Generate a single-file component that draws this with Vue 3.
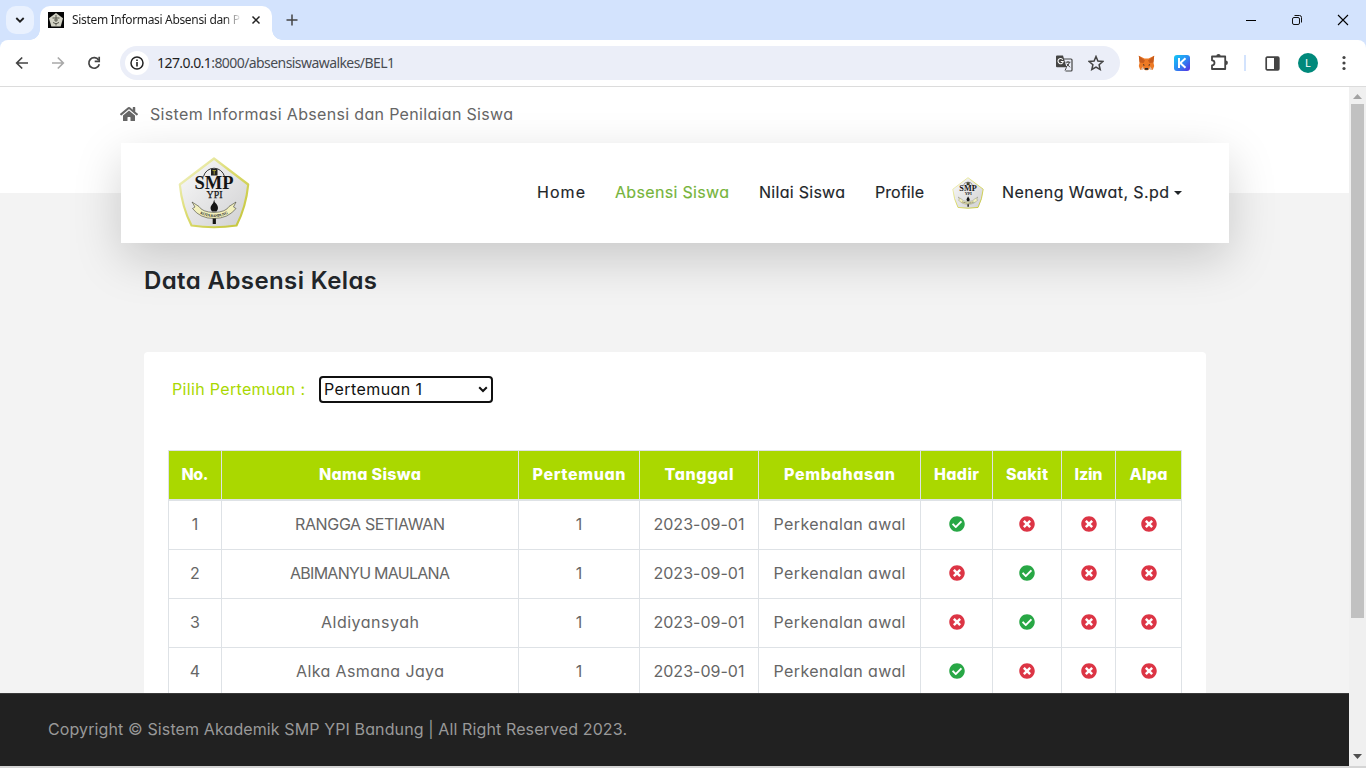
<script setup>
const headers = [
  ['No.', 27], ['Nama Siswa', 102], ['Pertemuan', 93], ['Tanggal', 69], ['Pembahasan', 111],
  ['Hadir', 45], ['Sakit', 42], ['Izin', 28], ['Alpa', 38],
]
const rows = [
  { name: 'RANGGA SETIAWAN', w: 150, marks: [1, 0, 0, 0] },
  { name: 'ABIMANYU MAULANA', w: 160, marks: [0, 1, 0, 0] },
  { name: 'Aldiyansyah', w: 98, marks: [0, 1, 0, 0] },
  { name: 'Alka Asmana Jaya', w: 148, marks: [1, 0, 0, 0] },
]

// Tracks a label out or in so that it fills a given width in pixels.
const vFit = {
  mounted(el, { value }) {
    const n = el.textContent.length
    const natural = el.getBoundingClientRect().width
    const gap = (value - natural) / Math.max(1, n - 1)
    el.style.letterSpacing = gap + 'px'
    el.style.marginRight = -gap + 'px'
  },
}
</script>

<template>
  <div class="window">
    <svg class="defs" width="0" height="0" aria-hidden="true">
      <defs>
        <linearGradient id="face" x1="0" y1="0" x2="1" y2="1">
          <stop offset="0" stop-color="#fafafa" /><stop offset="1" stop-color="#d0d0d2" />
        </linearGradient>
        <linearGradient id="rim" x1="0" y1="0" x2="1" y2="1">
          <stop offset="0" stop-color="#f6f6d8" /><stop offset=".45" stop-color="#dcdc70" /><stop offset="1" stop-color="#c3c437" />
        </linearGradient>
        <linearGradient id="kblue" x1="0" y1="0" x2="1" y2="1">
          <stop offset="0" stop-color="#12c8f5" /><stop offset=".5" stop-color="#2b8cf3" /><stop offset="1" stop-color="#5a2be0" />
        </linearGradient>
        <symbol id="crest" viewBox="0 0 72 72">
          <path d="M36 1.500 70.200 27.500Q68 50 58.500 68.500 36 72 13.500 68.500 4 50 1.800 27.500Z" fill="url(#face)" stroke="url(#rim)" stroke-width="2.200" stroke-linejoin="round" />
          <path d="M25.500 19.500a10.800 10.800 0 0 1 21 0" fill="none" stroke="#222" stroke-width=".9" />
          <path d="M33 12h6.500v6.500h-6.500z" fill="#222" /><path d="M34.500 13.500h3.500M36.200 13.500v4" stroke="#a49c35" stroke-width="1" />
          <text x="36" y="32" text-anchor="middle" textLength="39" lengthAdjust="spacingAndGlyphs" font-family="Liberation Serif, serif" font-weight="700" font-size="19" fill="#151515">SMP</text>
          <text x="36.500" y="41" text-anchor="middle" textLength="16" lengthAdjust="spacingAndGlyphs" font-family="Liberation Serif, serif" font-size="10" fill="#151515" stroke="#151515" stroke-width=".25">YPI</text>
          <path d="M36.200 42.500Q36 45 38.500 47 41.500 51 38.500 54.500H34Q31 51 34 47.500 35.500 46 36.200 42.500Z" fill="#151515" />
          <path d="M34.700 60h3.200v7h-3.200z" fill="#151515" />
          <path d="M14 45 21 49.500Q24 55 36 55.500 48 55 51 49.500L58 45 55.500 50 58 51.500Q50 61.500 36 61.500 22 61.500 14.500 51.500L17 50Z" fill="#f3f1bd" stroke="#33332a" stroke-width=".55" />
          <path id="ribbon" d="M22 56.600Q36 63.500 50 56.600" fill="none" />
          <text font-family="Liberation Serif, serif" font-weight="700" font-size="3.800" fill="#222"><textPath href="#ribbon" textLength="29">KOTA BANDUNG</textPath></text>
        </symbol>
        <symbol id="yes" viewBox="0 0 512 512">
          <path fill="#28a745" d="M504 256c0 136.967-111.033 248-248 248S8 392.967 8 256 119.033 8 256 8s248 111.033 248 248zM227.314 387.314l184-184c6.248-6.248 6.248-16.379 0-22.627l-22.627-22.627c-6.248-6.249-16.379-6.249-22.628 0L216 308.118l-70.059-70.059c-6.248-6.248-16.379-6.248-22.628 0l-22.627 22.627c-6.248 6.248-6.248 16.379 0 22.627l104 104c6.249 6.249 16.379 6.249 22.628.001z" />
        </symbol>
        <symbol id="no" viewBox="0 0 512 512">
          <path fill="#dc3545" d="M256 8C119 8 8 119 8 256s111 248 248 248 248-111 248-248S393 8 256 8zm121.600 313.100c4.700 4.700 4.700 12.300 0 17L338 377.600c-4.700 4.700-12.300 4.700-17 0L256 312l-65.100 65.600c-4.700 4.700-12.300 4.700-17 0L134.400 338c-4.700-4.700-4.700-12.300 0-17l65.600-65-65.600-65.100c-4.700-4.700-4.700-12.300 0-17l39.600-39.600c4.700-4.700 12.300-4.700 17 0l65 65.700 65.100-65.600c4.700-4.700 12.300-4.700 17 0l39.600 39.600c4.700 4.700 4.700 12.300 0 17L312 256l65.600 65.100z" />
        </symbol>
      </defs>
    </svg>

    <header class="tabstrip">
      <button class="tab-menu"><svg width="10" height="8" viewBox="0 0 10 8"><path d="M1.300 2 5 5.700 8.700 2" fill="none" stroke="#1f1f1f" stroke-width="1.800" /></svg></button>
      <div class="tab">
        <svg class="favicon" width="16" height="16"><rect width="16" height="16" fill="#050505" /><path d="M8 1 15 6.300 12.700 14.500H3.300L1 6.300Z" fill="#d2d2c4" /><path d="M4.500 6h7M8 3v7M6 8h4M5 10.500q3 2.500 6 0M8 11v2.500" stroke="#55554a" fill="none" /></svg>
        <div class="tab-title"><span v-fit="168">Sistem Informasi Absensi dan P</span></div>
        <svg class="tab-close" width="10" height="10"><path d="m1.500 1.500 7 7m0-7-7 7" stroke="#222" stroke-width="1.500" /></svg>
      </div>
      <svg class="plus" width="12" height="12"><path d="M6 .5v11M.5 6h11" stroke="#444" stroke-width="1.500" /></svg>
      <div class="controls">
        <svg width="12" height="12"><path d="M1 6.500h10" stroke="#000" /></svg>
        <svg width="12" height="12" fill="none" stroke="#111"><rect x="1.500" y="3.500" width="7" height="7" rx="1.500" /><path d="M3.500 1.500h5a2 2 0 0 1 2 2v5" /></svg>
        <svg width="12" height="12"><path d="m1 1 10 10m0-10L1 11" stroke="#000" stroke-width="1.100" /></svg>
      </div>
    </header>

    <div class="toolbar">
      <svg class="arrow" width="14" height="14" fill="none" stroke="#444" stroke-width="1.700"><path d="M13 7H2M7.200 1.500 1.700 7l5.500 5.500" /></svg>
      <svg class="arrow" width="14" height="14" fill="none" stroke="#a9a9a9" stroke-width="1.700"><path d="M1 7h11M6.800 1.500 12.300 7l-5.500 5.500" /></svg>
      <svg class="reload" width="14" height="14" fill="none" stroke="#444" stroke-width="1.700"><path d="M11.600 4A5.300 5.300 0 1 0 12.300 8.300" /><path d="M12.200.8v4.500H7.700" /></svg>
      <div class="address">
        <div class="site-info"><svg width="14" height="14"><circle cx="7" cy="7" r="6" fill="none" stroke="#222" stroke-width="1.500" /><path d="M7 6v4.500M7 3.500v1.600" stroke="#222" stroke-width="1.600" /></svg></div>
        <span class="url" v-fit="238">127.0.0.1<b>:8000/absensiswawalkes/BEL1</b></span>
        <svg class="translate" width="17" height="17" viewBox="0 0 17 17"><path d="M7 4h8a1 1 0 0 1 1 1v10a1 1 0 0 1-1 1H9.500" fill="none" stroke="#444" stroke-width="1.200" /><path d="M1 .5h6l3.500 11.800H1a1 1 0 0 1-1-1V1.500a1 1 0 0 1 1-1z" fill="#444" /><path d="M6.800 4.700A2.600 2.600 0 1 0 7.200 6.500H4.800" fill="none" stroke="#fff" stroke-width="1.100" /><path d="M9.500 7.200h5M12 6v1.200M13.500 7.200Q12.700 10.300 10 12M10.800 8.800 14 12.300M10.500 12.300 9 15.500" fill="none" stroke="#444" /></svg>
        <svg class="star" width="16" height="16" viewBox="0 0 16 16"><path d="m8 1.500 1.900 4.600 4.900.4-3.700 3.200 1.100 4.800L8 12l-4.200 2.500 1.100-4.800L1.200 6.500l4.900-.4z" fill="none" stroke="#444" stroke-width="1.500" /></svg>
      </div>
      <div class="extensions">
        <svg class="fox" width="17" height="16" viewBox="0 0 17 16"><path d="M.8.8 6.500 3.500h4L16.200.8l-.8 6.700.8 3.500-1.500 4-3.600-1-1.500 1.200H7.400L5.900 14l-3.600 1-1.500-4 .8-3.500z" fill="#ed7a25" /><path d="M.8.8 7 5.500 5.500 8 1.600 7.500zM16.200.8 10 5.500 11.500 8l3.900-.5z" fill="#c85c1c" /><path d="m5 9 2 1.200-1.800.3zm7 0-2 1.200 1.800.3zM7 13h3l.5 1.700h-4z" fill="#292929" /><path d="m2.300 15 3.600-1-1-2.500zm12.400 0-3.600-1 1-2.500z" fill="#d9bda8" /></svg>
        <svg class="kbadge" width="16" height="16"><rect width="16" height="16" rx="3" fill="url(#kblue)" /><path d="M5 3v10M11.500 3.300 6.300 8l5.200 4.800" fill="none" stroke="#fff" stroke-width="2" /></svg>
        <svg class="puzzle" width="18" height="18" viewBox="0 0 18 18"><path d="M2 3.500h13.200V16H2v-3.700a2.200 2.200 0 0 0 0-5z" fill="none" stroke="#444" stroke-width="1.800" stroke-linejoin="round" /><path d="M6.300 3.200a2.200 2.200 0 0 1 4.400 0zM15.700 7.500a2.200 2.200 0 0 1 0 4.400z" fill="#444" /></svg>
        <i class="divider"></i>
        <svg class="panel" width="15" height="15"><rect x="1.200" y="1.200" width="12.600" height="12.600" rx="1" fill="none" stroke="#444" stroke-width="1.700" /><path d="M9 1h5v13H9z" fill="#444" /></svg>
        <div class="avatar">L</div>
        <svg class="more" width="4" height="16" fill="#444"><circle cx="2" cy="2.500" r="1.600" /><circle cx="2" cy="8" r="1.600" /><circle cx="2" cy="13.500" r="1.600" /></svg>
      </div>
    </div>

    <div class="viewport">
      <main class="page">
        <section class="hero">
          <div class="brandline">
            <svg width="18" height="16" viewBox="0 0 576 512"><path fill="#666" d="M280.370 148.260L96 300.110V464a16 16 0 0 0 16 16l112.060-.29a16 16 0 0 0 15.920-16V368a16 16 0 0 1 16-16h64a16 16 0 0 1 16 16v95.640a16 16 0 0 0 16 16.050L464 480a16 16 0 0 0 16-16V300L295.670 148.260a12.190 12.190 0 0 0-15.300 0zM571.600 251.470L488 182.560V44.050a12 12 0 0 0-12-12h-56a12 12 0 0 0-12 12v72.610L318.470 43a48 48 0 0 0-61 0L4.340 251.470a12 12 0 0 0-1.600 16.900l25.500 31A12 12 0 0 0 45.150 301l235.220-193.740a12.190 12.190 0 0 1 15.300 0L530.900 301a12 12 0 0 0 16.900-1.600l25.500-31a12 12 0 0 0-1.700-16.930z" /></svg>
            <span v-fit="363">Sistem Informasi Absensi dan Penilaian Siswa</span>
          </div>
        </section>
        <nav class="navbar">
          <svg class="logo" width="72" height="72"><use href="#crest" /></svg>
          <div class="links">
            <a><span v-fit="48">Home</span></a>
            <a class="active"><span v-fit="114">Absensi Siswa</span></a>
            <a><span v-fit="86">Nilai Siswa</span></a>
            <a><span v-fit="49">Profile</span></a>
            <svg class="mini" width="32" height="32"><use href="#crest" /></svg>
            <a><span v-fit="167">Neneng Wawat, S.pd</span></a>
            <i class="caret"></i>
          </div>
        </nav>
        <h1><span v-fit="233">Data Absensi Kelas</span></h1>
        <section class="card">
          <div class="filter">
            <label><span v-fit="133">Pilih Pertemuan :</span></label>
            <div class="select">
              <span v-fit="98">Pertemuan 1</span>
              <svg width="10" height="7"><path d="m1.200 1.200 3.800 3.800 3.800-3.800" fill="none" stroke="#111" stroke-width="2" /></svg>
            </div>
          </div>
          <table>
            <colgroup><col class="c1"><col class="c2"><col class="c3"><col class="c4"><col class="c5"><col class="c6"><col class="c7"><col class="c8"><col class="c9"></colgroup>
            <thead><tr><th v-for="h in headers" :key="h[0]"><span v-fit="h[1]">{{ h[0] }}</span></th></tr></thead>
            <tbody>
              <tr v-for="(r, i) in rows" :key="r.name">
                <td><span>{{ i + 1 }}</span></td>
                <td><span v-fit="r.w">{{ r.name }}</span></td>
                <td><span>1</span></td>
                <td><span v-fit="91">2023-09-01</span></td>
                <td><span v-fit="132">Perkenalan awal</span></td>
                <td v-for="(m, k) in r.marks" :key="k" class="mark"><svg width="16" height="16"><use :href="m ? '#yes' : '#no'" /></svg></td>
              </tr>
            </tbody>
          </table>
        </section>
        <footer><span v-fit="579">Copyright © Sistem Akademik SMP YPI Bandung | All Right Reserved 2023.</span></footer>
      </main>
      <aside class="scrollbar">
        <svg width="9" height="5"><path d="M0 5 4.500 0 9 5z" fill="#a3a3a3" /></svg>
        <div class="thumb"></div>
        <svg class="down" width="9" height="5"><path d="M0 0h9L4.500 5z" fill="#505050" /></svg>
      </aside>
    </div>
    <div class="edge"></div>
  </div>
</template>

<style>
body { margin: 0; overflow: hidden; }
</style>

<style scoped>
* { box-sizing: border-box; }
.window { width: 1366px; height: 768px; display: flex; flex-direction: column; overflow: hidden; background: #d3e3fd; font-family: Inter, "Open Sans", sans-serif; }
.defs { position: absolute; }
svg { display: block; flex: none; }
span { display: inline-block; white-space: nowrap; }
.tabstrip { height: 40px; flex: none; display: flex; align-items: center; padding-left: 6px; }
.tab-menu { width: 28px; height: 28px; border: 0; border-radius: 10px; background: #e9f1fe; display: flex; align-items: center; justify-content: center; padding: 0; }
.tab { position: relative; align-self: flex-end; height: 34px; width: 232px; margin-left: 6px; background: #fff; border-radius: 10px 10px 0 0; display: flex; align-items: center; padding: 0 11px 6px 8px; }
.tab::before, .tab::after { content: ""; position: absolute; bottom: 0; width: 10px; height: 10px; }
.tab::before { left: -10px; background: radial-gradient(circle at 0 0, transparent 9.500px, #fff 10px); }
.tab::after { right: -10px; background: radial-gradient(circle at 100% 0, transparent 9.500px, #fff 10px); }
.tab-title { width: 170px; margin-left: 8px; font: 12px/16px "Noto Sans", sans-serif; color: #1f1f1f; -webkit-mask-image: linear-gradient(90deg, #000 152px, transparent 170px); mask-image: linear-gradient(90deg, #000 152px, transparent 170px); }
.tab-close { margin-left: auto; }
.plus { margin-left: 14px; }
.controls { margin-left: auto; display: flex; gap: 34px; padding-right: 17px; }
.toolbar { height: 47px; flex: none; background: #fff; border-bottom: 1px solid #dcdcdc; border-radius: 8px 8px 0 0; display: flex; align-items: center; padding-left: 15px; }
.arrow { margin-right: 22px; }
.reload { margin-right: 19px; }
.address { width: 1000px; height: 34px; border-radius: 17px; background: #ebeef8; display: flex; align-items: center; padding: 0 16px 0 5px; }
.site-info { width: 24px; height: 24px; border-radius: 50%; background: #fff; display: flex; align-items: center; justify-content: center; }
.url { margin-left: 8px; font: 14px/20px "Noto Sans", sans-serif; color: #1f1f1f; }
.url b { font-weight: 400; color: #484c52; }
.translate { margin-left: auto; margin-right: 15px; }
.extensions { flex: 1; display: flex; align-items: center; padding-left: 18px; }
.kbadge { margin-left: 19px; }
.puzzle { margin-left: 20px; margin-top: -2px; }
.divider { width: 2px; height: 16px; margin-left: 16px; background: #d3e3fd; }
.panel { margin-left: 19px; }
.avatar { width: 20px; height: 20px; margin-left: 18px; border-radius: 50%; background: #00897b; color: #fff; font: 11px/20px "Noto Sans", sans-serif; text-align: center; }
.more { margin-left: 24px; }
.viewport { flex: 1; min-height: 0; display: flex; }
.page { position: relative; width: 1349px; overflow: hidden; background: #f3f3f3; color: #666; font-size: 16px; line-height: 24px; font-feature-settings: "cv11"; }
.hero { height: 106px; background: #fff; padding: 15px 0 0 120px; }
.brandline { display: flex; align-items: center; gap: 12px; }
.navbar { position: relative; width: 1108px; height: 100px; margin: -50px 0 0 121px; background: #fff; box-shadow: 0 16px 48px rgba(0, 0, 0, .175); display: flex; align-items: center; justify-content: space-between; padding: 0 47px 0 57px; }
.links { display: flex; align-items: center; color: #212529; }
.links a { margin: -2px 30px 0 0; -webkit-text-stroke: .15px; }
.links .active { color: #76b43b; }
.links .mini { margin: -1px 18px 0 -2px; }
.links .caret { width: 0; height: 0; margin-left: -25px; border: 4px solid transparent; border-top-color: #212529; border-bottom: 0; }
h1 { position: relative; margin: 20px 0 0 144px; color: #212529; font-size: 24px; font-weight: 600; line-height: 36px; }
.card { position: relative; width: 1062px; height: 500px; margin: 53px 0 0 144px; border-radius: 4px; background: #fff; padding: 24px; }
.filter { display: flex; align-items: center; height: 27px; padding-left: 4px; }
.filter label { width: 147px; margin-top: -2px; color: #a9d800; }
.select { width: 174px; height: 27px; border: 2px solid #101010; border-radius: 4px; display: flex; align-items: center; justify-content: space-between; padding: 0 3px; color: #111; }
.select span { margin-top: -2px; }
table { table-layout: fixed; width: 1014px; margin-top: 47px; border-collapse: separate; border-spacing: 0; border: solid #dee2e6; border-width: 1px 0 0 1px; }
th, td { padding: 0 0 2px; text-align: center; vertical-align: middle; border: solid #dee2e6; border-width: 0 1px 1px 0; height: 49px; }
th { height: 50px; border-bottom-width: 2px; background: #aad800; color: #fff; font-weight: 800; }
td.mark { padding: 0 0 2px; }
td svg { margin: 0 auto; }
.c1 { width: 53px; } .c2 { width: 297px; } .c3 { width: 121px; } .c4 { width: 119px; } .c5 { width: 162px; }
.c6 { width: 72px; } .c7 { width: 69px; } .c8 { width: 54px; } .c9 { width: 66px; }
footer { position: absolute; left: 0; right: 0; bottom: 0; height: 73px; background: #212121; border-top: 1px solid #3a3a3a; padding: 23px 48px; color: #999; font-weight: 400; }
.scrollbar { width: 17px; background: #f0f0f0; display: flex; flex-direction: column; align-items: center; padding: 7px 0; }
.thumb { width: 13px; height: 514px; margin-top: 5px; background: #c1c1c1; }
.down { margin-top: auto; }
.edge { height: 2px; flex: none; background: #d5d5d5; }
</style>
